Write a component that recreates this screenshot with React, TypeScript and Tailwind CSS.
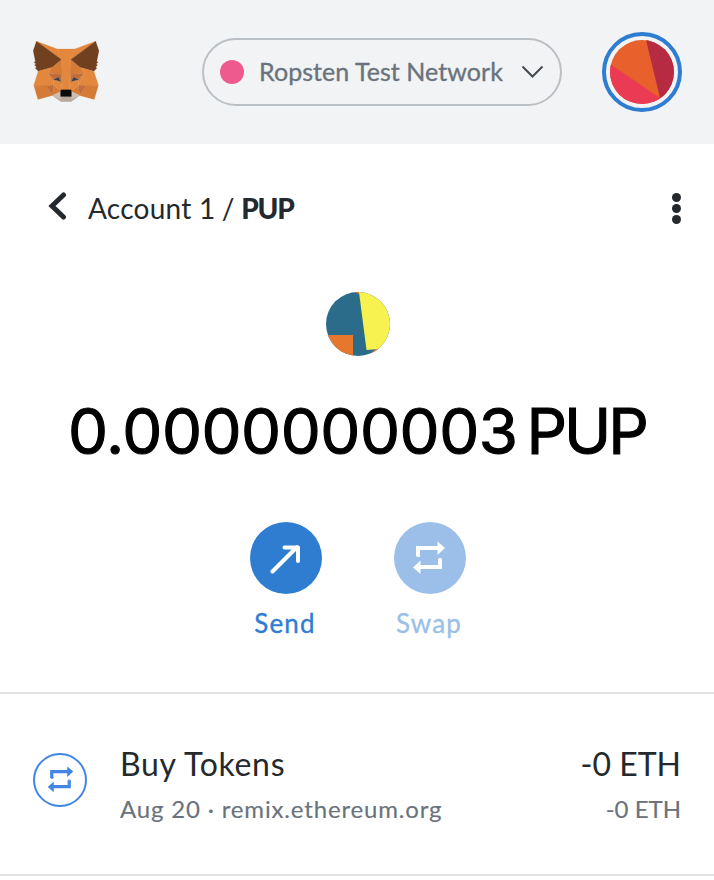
import React from "react";

const foxShapes: [string, string][] = [
  ["#e2873b", "274.1,35.5 174.6,109.4 193,65.8"],
  ["#e2873b", "44.4,35.5 143.1,110.1 125.6,65.8"],
  ["#d57b35", "238.3,206.8 211.8,247.4 268.5,263 284.8,207.7"],
  ["#d57b35", "33.9,207.7 50.1,263 106.8,247.4 80.3,206.8"],
  ["#d57b35", "103.6,138.2 87.8,162.1 144.1,164.6 142.1,104.1"],
  ["#d57b35", "214.9,138.2 175.9,103.4 174.6,164.6 230.8,162.1"],
  ["#d57b35", "106.8,247.4 140.6,230.9 111.4,208.1"],
  ["#d57b35", "177.9,230.9 211.8,247.4 207.1,208.1"],
  ["#cdbdb1", "211.8,247.4 177.9,230.9 180.6,253 180.3,262.3"],
  ["#cdbdb1", "106.8,247.4 138.3,262.3 138.1,253 140.6,230.9"],
  ["#c26d39", "106.8,247.4 111.6,206.8 80.3,207.7"],
  ["#c26d39", "207,206.8 211.8,247.4 238.3,207.7"],
  ["#c26d39", "230.8,162.1 174.6,164.6 179.8,193.5 188.1,176.1 208.1,185.2"],
  ["#c26d39", "110.6,185.2 130.6,176.1 138.8,193.5 144.1,164.6 87.8,162.1"],
  ["#da8039", "87.8,162.1 111.4,208.1 110.6,185.2"],
  ["#da8039", "208.1,185.2 207.1,208.1 230.8,162.1"],
  ["#da8039", "144.1,164.6 138.8,193.5 145.4,227.6 146.9,182.7"],
  ["#da8039", "174.6,164.6 171.9,182.6 173.1,227.6 179.8,193.5"],
  ["#e2873b", "179.8,193.5 173.1,227.6 177.9,230.9 207.1,208.1 208.1,185.2"],
  ["#e2873b", "110.6,185.2 111.4,208.1 140.6,230.9 145.4,227.6 138.8,193.5"],
  ["#34414c", "138.8,193.5 110.6,185.2 130.5,176.1"],
  ["#34414c", "179.7,193.5 188,176.1 208,185.2"],
  ["#b9a89c", "180.3,262.3 180.6,253 178.1,250.8 140.4,250.8 138.1,253 138.3,262.3 106.8,247.4 117.8,256.4 140.1,271.9 178.4,271.9 200.8,256.4 211.8,247.4"],
  ["#70401f", "278.3,114.2 286.8,73.4 274.1,35.5 177.9,106.9 214.9,138.2 267.2,153.5 278.8,140 273.8,136.4 281.8,129.1 275.6,124.3 283.6,118.2"],
  ["#70401f", "31.8,73.4 40.3,114.2 34.9,118.2 42.9,124.3 36.8,129.1 44.8,136.4 39.8,140 51.3,153.5 103.6,138.2 140.6,106.9 44.4,35.5"],
  ["#e2873b", "267.2,153.5 214.9,138.2 230.8,162.1 207.1,208.1 238.3,207.7 284.8,207.7"],
  ["#e2873b", "103.6,138.2 51.3,153.5 33.9,207.7 80.3,207.7 111.4,208.1 87.8,162.1"],
  ["#e2873b", "174.6,164.6 177.9,106.9 193.1,65.8 125.6,65.8 140.6,106.9 144.1,164.6 145.3,182.8 145.4,227.6 173.1,227.6 173.3,182.8"],
  ["#0b0b0b", "180,229 177,225 141,225 138,229 138,252 180,252"],
];

function Fox() {
  return (
    <svg className="mb-px h-[61px] w-[66px]" viewBox="31 35 256 238" preserveAspectRatio="none">
      {foxShapes.map(([fill, points], i) => (
        <polygon key={i} points={points} fill={fill} stroke={fill} strokeWidth="0.8" />
      ))}
    </svg>
  );
}

function SwapArrows({ className }: { className: string }) {
  return (
    <svg className={className} viewBox="0 0 32 34" fill="none">
      <path d="M5 15V7H26M27 18V26H6" stroke="currentColor" strokeWidth="4" />
      <path d="M3 14h4v2H4zM25 18h4l-1-1h-2z" fill="currentColor" />
      <path d="M24.500 0.500L32 7L24.500 14zM7.500 19.500L0 26.500L7.500 33z" fill="currentColor" />
    </svg>
  );
}

export default function App() {
  return (
    <div className="h-[880px] w-[714px] overflow-hidden bg-white font-[Lato,sans-serif] text-[#24292e]">
      <header className="flex h-36 items-center bg-[#f2f3f5] pr-8 pl-[33px]">
        <Fox />
        <button className="ml-[103px] flex h-[68px] w-[360px] items-center rounded-full border-2 border-[#bbc0c5] pl-4">
          <span className="size-6 shrink-0 rounded-full bg-[#ee5a8d]" />
          <span className="mb-0.5 ml-[15px] w-[246px] shrink-0 text-left text-[25px] leading-8 tracking-[0.05px] whitespace-nowrap text-[#6a737d] [-webkit-text-stroke:0.35px_#6a737d]">
            Ropsten Test Network
          </span>
          <svg className="ml-4 h-3.5 w-[23px]" viewBox="0 0 23 14" fill="none">
            <path d="M1.500 1.500L11.500 11.500L21.500 1.500" stroke="#454a50" strokeWidth="2" />
          </svg>
        </button>
        <div className="ml-10 flex size-20 items-center justify-center rounded-full border-4 border-[#2f7dd1]">
          <svg className="size-16" viewBox="0 0 64 64">
            <defs>
              <clipPath id="avatar"><circle cx="32" cy="32" r="32" /></clipPath>
            </defs>
            <g clipPath="url(#avatar)">
              <path fill="#e8602b" d="M0 0h64v64H0z" />
              <path fill="#ea3a54" d="M0 24L50 58V64H0z" />
              <path fill="#b62b41" d="M36 0L50 58L64 64V0z" />
            </g>
          </svg>
        </div>
      </header>

      <nav className="flex h-[128px] items-center pr-[33.5px] pl-[47px]">
        <svg className="mb-1 h-7 w-5" viewBox="0 0 20 28" fill="none">
          <path d="M16.500 3L5 14L16.500 25" stroke="#24292e" strokeWidth="5" strokeLinecap="round" />
        </svg>
        <div className="ml-[21px] text-[28px] leading-9 tracking-[0.25px] whitespace-nowrap">
          Account 1<span className="-ml-px"> /</span> <b className="-ml-px font-black tracking-[-1.2px]">PUP</b>
        </div>
        <div className="ml-auto flex flex-col gap-0.5">
          <span className="size-[9px] rounded-full bg-[#24292e]" />
          <span className="size-[9px] rounded-full bg-[#24292e]" />
          <span className="size-[9px] rounded-full bg-[#24292e]" />
        </div>
      </nav>

      <main className="flex h-[420px] flex-col items-center pt-5">
        <svg className="ml-0.5 size-16" viewBox="0 0 64 64">
          <defs>
            <clipPath id="token"><circle cx="32" cy="32" r="32" /></clipPath>
          </defs>
          <g clipPath="url(#token)">
            <path fill="#2b6c8b" d="M0 0h64v64H0z" />
            <path fill="#e8772e" d="M0 43H27V64H0zM30 0H34V2L30 1zM46 60L51 56H58V64H46z" />
            <path fill="#f7f24f" d="M33 0L40.500 58L64 56V0z" />
          </g>
        </svg>
        <h1 className="mt-[35px] mb-px flex h-20 items-center gap-[9px] font-[Inter,sans-serif] text-[63.5px] leading-none whitespace-nowrap text-black [-webkit-text-stroke:1.1px_black]">
          <span className="tracking-[-0.45px]">0.0000000003</span>
          <span className="tracking-[-3px]">PUP</span>
        </h1>
        <div className="mt-[50px] ml-0.5 flex gap-[72px]">
          <div className="flex w-[72px] flex-col items-center text-[#2f7dd1]">
            <div className="flex size-[72px] items-center justify-center rounded-full bg-[#2f7dd1] text-white">
              <svg className="mr-0.5 h-8 w-8" viewBox="0 0 32 32" fill="none">
                <path d="M3.500 29.500L28 5M15.500 5.500H29V19" stroke="currentColor" strokeWidth="4" strokeLinecap="round" strokeLinejoin="round" />
              </svg>
            </div>
            <span className="mt-[11px] -ml-0.5 text-[26px] leading-9 tracking-[1.2px] [-webkit-text-stroke:0.35px_#2f7dd1]">Send</span>
          </div>
          <div className="flex w-[72px] flex-col items-center text-[#9bbfe9]">
            <div className="flex size-[72px] items-center justify-center rounded-full bg-[#9bbfe9] text-white">
              <SwapArrows className="mr-0.5 h-[34px] w-8" />
            </div>
            <span className="mt-[11px] -ml-0.5 text-[26px] leading-9 tracking-[1.2px] [-webkit-text-stroke:0.35px_#9bbfe9]">Swap</span>
          </div>
        </div>
      </main>

      <section className="flex h-[184px] items-center border-y-2 border-[#e1e2e4] pt-0.5 pr-[33px] pl-[33px]">
        <div className="mt-[-11px] flex size-[54px] items-center justify-center rounded-full border-2 border-[#4285e5] text-[#4285e5]">
          <SwapArrows className="h-[27px] w-[27px]" />
        </div>
        <div className="ml-[33px] whitespace-nowrap">
          <div className="text-[32px] leading-10 tracking-[0.7px]">Buy Tokens</div>
          <div className="mt-[7px] text-[24px] leading-9 tracking-[0.83px] text-[#6a737d] [-webkit-text-stroke:0.15px_#6a737d]">Aug 20 · remix.ethereum.org</div>
        </div>
        <div className="ml-auto text-right whitespace-nowrap">
          <div className="text-[32px] leading-10">-0 ETH</div>
          <div className="mt-[7px] text-[24px] leading-9 text-[#6a737d] [-webkit-text-stroke:0.15px_#6a737d]">-0 ETH</div>
        </div>
      </section>
    </div>
  );
}
